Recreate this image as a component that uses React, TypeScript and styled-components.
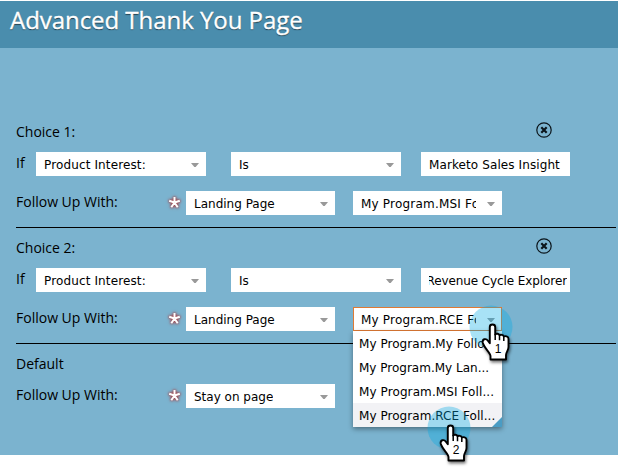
import React from 'react';
import styled, { createGlobalStyle } from 'styled-components';

const GlobalStyle = createGlobalStyle`
  * { box-sizing: border-box; }
  html { background: #fff; }
  body { margin: 0; padding-top: 1px; min-height: 470px; }
`;

const Page = styled.main`
  width: 618px;
  height: 454px;
  position: relative;
  background: #7bb3cf;
  color: #000;
  font: 14px/20px 'Open Sans', 'Noto Sans', sans-serif;
`;

const Header = styled.header`
  height: 47px;
  padding: 3px 10px 0;
  background: #4a8dad;
`;

const Title = styled.h1`
  margin: 0;
  color: #fff;
  font-size: 24px;
  font-weight: 400;
  line-height: 32px;
  letter-spacing: -0.05px;
  -webkit-text-stroke: 0.35px #fff;
  text-shadow: 0 1px 1px rgba(0, 0, 0, 0.6);
  white-space: nowrap;
`;

const Form = styled.div`
  padding: 64px 2px 0 16px;
`;

const Section = styled.section<{ $last?: boolean }>`
  height: 116px;
  padding-top: 10px;
  border-bottom: ${(p) => (p.$last ? '0' : '1px solid #000')};
`;

const Heading = styled.div`
  display: flex;
  justify-content: space-between;
  height: 20px;
  padding-right: 64px;
`;

const Row = styled.div<{ $top: number }>`
  display: flex;
  height: 24px;
  margin-top: ${(p) => p.$top}px;
`;

const Label = styled.span<{ $width: number }>`
  width: ${(p) => p.$width}px;
  flex: none;
  padding-top: 1px;
  white-space: nowrap;
`;

const Field = styled.div<{ $width: number; $gap?: number; $focus?: boolean }>`
  display: flex;
  align-items: center;
  justify-content: space-between;
  flex: none;
  width: ${(p) => p.$width}px;
  height: 24px;
  margin-left: ${(p) => p.$gap ?? 0}px;
  padding: 1px 7px 0 8px;
  background: #fff;
  box-shadow: ${(p) => (p.$focus ? 'inset 0 0 0 1px #df7a34' : 'none')};
  font: 12px/22px 'DejaVu Sans', sans-serif;
`;

const Value = styled.span<{ $clip?: number; $end?: boolean; $spacing?: number }>`
  display: flex;
  flex: none;
  justify-content: ${(p) => (p.$end ? 'flex-end' : 'flex-start')};
  width: ${(p) => (p.$clip ? `${p.$clip}px` : 'auto')};
  overflow: hidden;
  white-space: nowrap;
  letter-spacing: ${(p) => p.$spacing ?? 0}px;
`;

const Required = styled.svg`
  flex: none;
  width: 17px;
  height: 17px;
  margin: 3px 3px 0 0;
  overflow: visible;
  filter: drop-shadow(0 0 1px rgba(168, 60, 64, 0.75)) drop-shadow(0 0 1.5px #a83c40);
`;

const CloseIcon = styled.svg`
  width: 16px;
  height: 16px;
`;

const ArrowIcon = styled.svg`
  flex: none;
  width: 8px;
  height: 4px;
`;

const Menu = styled.div`
  position: absolute;
  left: 353px;
  top: 330px;
  width: 149px;
  background: #fff;
  box-shadow: 0 2px 5px rgba(0, 0, 0, 0.4);
  font: 12px/26px 'DejaVu Sans', sans-serif;
`;

const Option = styled.div<{ $active?: boolean; $spacing?: number }>`
  height: 24px;
  padding-left: 6px;
  white-space: nowrap;
  background: ${(p) => (p.$active ? '#f2f2f5' : '#fff')};
  letter-spacing: ${(p) => p.$spacing ?? 0}px;
`;

const Grip = styled.svg`
  position: absolute;
  right: 0;
  bottom: 0;
  width: 10px;
  height: 10px;
`;

const Marker = styled.svg<{ $x: number; $y: number }>`
  position: absolute;
  left: ${(p) => p.$x}px;
  top: ${(p) => p.$y}px;
  width: 44px;
  height: 60px;
  overflow: visible;
`;

const Hand = styled.g`
  filter: drop-shadow(1px 2px 1.5px rgba(0, 0, 0, 0.55));
`;

const Arrow = () => (
  <ArrowIcon viewBox="0 0 8 4"><path d="M0 0h8L4.7 4H3.3z" fill="#999" /></ArrowIcon>
);

const Star = () => (
  <Required viewBox="0 0 17 17">
    <path d="M8.5 8.5V3M8.5 8.5L3.2 6.8M8.5 8.5L13.8 6.8M8.5 8.5L5.3 13.2M8.5 8.5L11.7 13.2" stroke="#fff" strokeWidth="2" />
  </Required>
);

const Close = () => (
  <CloseIcon viewBox="0 0 16 16" fill="none" stroke="#0b151b">
    <circle cx="8" cy="8" r="7.2" strokeWidth="1.2" />
    <path d="M5.3 5.3l5.4 5.4M10.7 5.3l-5.4 5.4" strokeWidth="2.2" />
  </CloseIcon>
);

type SelectProps = { width: number; gap?: number; text: string; clip?: number; spacing?: number; focus?: boolean };
const Select = ({ width, gap, text, clip, spacing, focus }: SelectProps) => (
  <Field $width={width} $gap={gap} $focus={focus}>
    <Value $clip={clip} $spacing={spacing}>{text}</Value>
    <Arrow />
  </Field>
);

const FollowUp = ({ page, target, focus }: { page: string; target?: string; focus?: boolean }) => (
  <>
    <Label $width={150}>Follow Up With:</Label>
    <Star />
    <Select width={149} text={page} />
    {target && <Select width={149} gap={18} text={target} clip={115} spacing={0.2} focus={focus} />}
  </>
);

const Click = ({ x, y, n }: { x: number; y: number; n: number }) => (
  <Marker $x={x} $y={y} viewBox="0 0 44 60">
    <circle cx="22" cy="22" r="21.5" fill="#00aae6" fillOpacity=".34" />
    <Hand>
      <path
        d="M20.8 22c0-3.300 5.400-3.300 5.400 0v7.500c.9-1.200 3.900-.9 4.300.8 1-1 4-.6 4.300 1.200 1.200-.9 4.700-.2 4.700 2.300v8.200c0 3.500-2.500 5-2.500 8v4.500H21.500v-3.500c0-3-6.800-8.500-7.800-13.500-.5-3.500 3.200-4.500 5.200-1.800l1.900 2.600z"
        fill="#fff" stroke="#000" strokeWidth="1.9" strokeLinejoin="round"
      />
      <path d="M26.2 29v6M30.5 30.3v5M34.8 31.5v4.5" stroke="#000" strokeWidth="1.5" />
    </Hand>
    <text x="29.2" y="48" textAnchor="middle" fontFamily="Liberation Sans" fontSize="12">{n}</text>
  </Marker>
);

export default function App() {
  return (
    <>
      <GlobalStyle />
      <Page>
        <Header><Title>Advanced Thank You Page</Title></Header>
        <Form>
          {[
            { title: 'Choice 1:', interest: 'Marketo Sales Insight', target: 'My Program.MSI Follow Up' },
            { title: 'Choice 2:', interest: 'Revenue Cycle Explorer', target: 'My Program.RCE Follow Up' },
          ].map((c, i) => (
            <Section key={c.title}>
              <Heading>{c.title}<Close /></Heading>
              <Row $top={10}>
                <Label $width={20}>If</Label>
                <Select width={170} text="Product Interest:" spacing={0.13} />
                <Select width={170} gap={25} text="Is" />
                <Field $width={149} $gap={20}>
                  <Value $clip={i ? 138 : 134} $end={i === 1} $spacing={i ? -0.1 : 0.1}>{c.interest}</Value>
                </Field>
              </Row>
              <Row $top={15}><FollowUp page="Landing Page" target={c.target} focus={i === 1} /></Row>
            </Section>
          ))}
          <Section $last>
            <Heading>Default</Heading>
            <Row $top={10}><FollowUp page="Stay on page" /></Row>
          </Section>
        </Form>
        <Menu>
          <Option $spacing={0.05}>My Program.My Follo...</Option>
          <Option>My Program.My Lan...</Option>
          <Option $spacing={0.1}>My Program.MSI Foll...</Option>
          <Option $active $spacing={0.05}>My Program.RCE Foll...</Option>
          <Grip viewBox="0 0 10 10"><path d="M10 0v10H0z" fill="#4a9cc4" /></Grip>
        </Menu>
        <Click x={468.5} y={304} n={1} />
        <Click x={426.5} y={405} n={2} />
      </Page>
    </>
  );
}
